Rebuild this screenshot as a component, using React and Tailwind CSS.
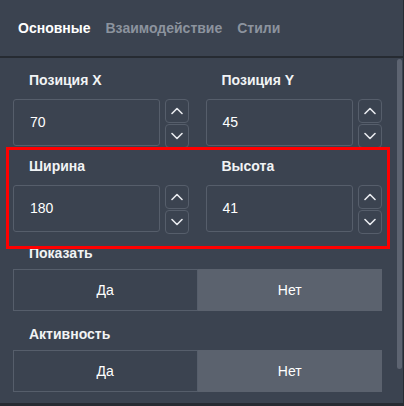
import React from "react";

const font = { fontFamily: '"Liberation Sans", Arial, sans-serif' };

function Chevron({ up }) {
  return (
    <svg width="12" height="8" viewBox="0 0 12 8" fill="none">
      <path
        d={up ? "M1 6.5 L6 1.5 L11 6.5" : "M1 1.5 L6 6.5 L11 1.5"}
        stroke="#e8eaee"
        strokeWidth="1.6"
        strokeLinecap="round"
        strokeLinejoin="round"
      />
    </svg>
  );
}

function NumField({ label, value }) {
  return (
    <div className="flex flex-col">
      <div className="h-5 pl-4 text-[14px] font-bold leading-5 text-[#f1f3f5]">{label}</div>
      <div className="mt-[9px] flex gap-[5px]">
        <div className="flex h-[47px] w-[147px] items-center rounded-[3px] border border-[#565e6b] pl-4 text-[14px] text-white">
          {value}
        </div>
        <div className="flex flex-col gap-[1px]">
          <button className="flex h-[24px] w-[24px] items-center justify-center rounded-[4px] border border-[#565e6b]">
            <Chevron up />
          </button>
          <button className="flex h-[24px] w-[24px] items-center justify-center rounded-[4px] border border-[#565e6b]">
            <Chevron />
          </button>
        </div>
      </div>
    </div>
  );
}

function Toggle({ label }) {
  return (
    <div className="flex flex-col">
      <div className="h-5 pl-4 text-[14px] font-bold leading-5 text-[#f1f3f5]">{label}</div>
      <div className="mt-[6px] grid h-[42px] grid-cols-2">
        <div className="flex items-center justify-center border border-[#565e6b] text-[14px] text-white">Да</div>
        <div className="flex items-center justify-center bg-[#5b626e] text-[14px] text-white">Нет</div>
      </div>
    </div>
  );
}

export default function App() {
  return (
    <div className="flex h-[406px] w-[404px] flex-col overflow-hidden border-b-[3px] border-r border-[#262b32] bg-[#3b4350]" style={font}>
      <div className="flex h-[58px] shrink-0 items-center gap-[15px] border-b-2 border-[#262b32] pl-[18px] text-[14px] font-bold">
        <span className="text-white">Основные</span>
        <span className="text-[#8c939e]">Взаимодействие</span>
        <span className="text-[#8c939e]">Стили</span>
      </div>
      <div className="flex flex-1">
        <div className="flex flex-1 flex-col pl-[13px] pr-[15px] pt-[12px]">
          <div className="grid grid-cols-2 gap-4">
            <NumField label="Позиция X" value="70" />
            <NumField label="Позиция Y" value="45" />
          </div>
          <div className="relative mt-[8px] grid grid-cols-2 gap-4">
            <NumField label="Ширина" value="180" />
            <NumField label="Высота" value="41" />
            <div className="pointer-events-none absolute bottom-[-15px] left-[-7px] right-[-8px] top-[-9px] border-[3px] border-[#ff0000]" />
          </div>
          <div className="mt-[9px]">
            <Toggle label="Показать" />
          </div>
          <div className="mt-[13px]">
            <Toggle label="Активность" />
          </div>
        </div>
        <div className="w-[6px] shrink-0 pt-[1px]">
          <div className="h-[310px] w-[5px] rounded-full bg-[#5d6471]" />
        </div>
      </div>
    </div>
  );
}
